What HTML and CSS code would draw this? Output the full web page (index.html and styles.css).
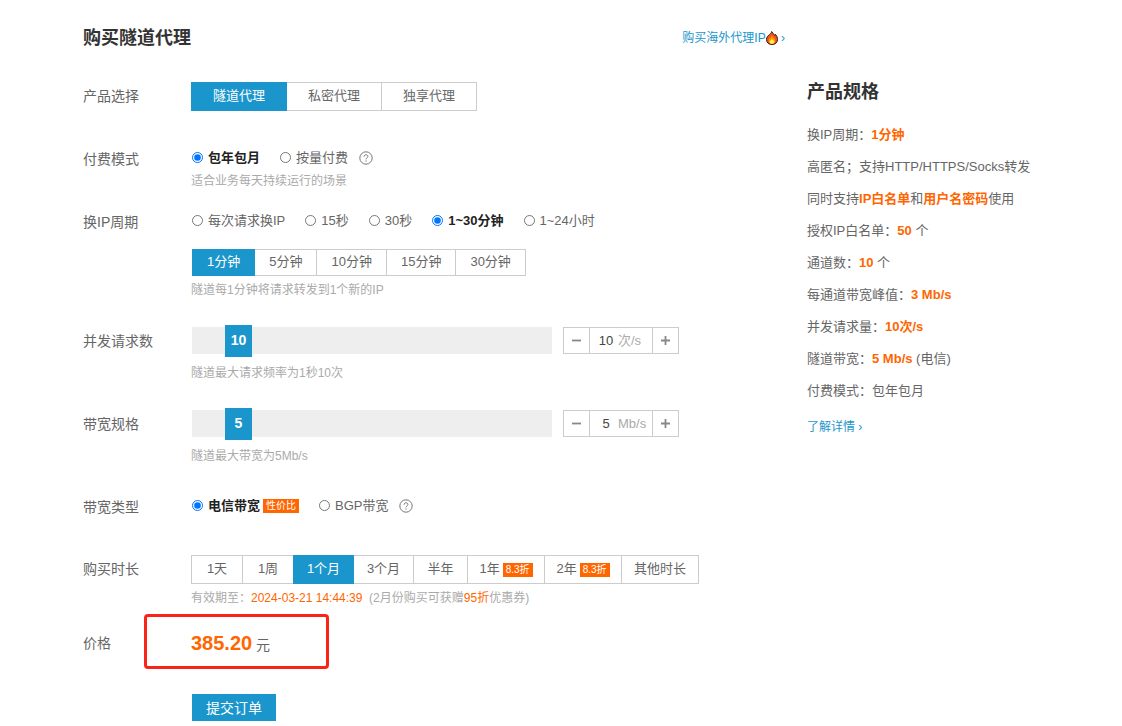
FILE: index.html
```html
<!DOCTYPE html>
<html lang="zh-CN">
<head>
<meta charset="utf-8">
<meta name="viewport" content="width=device-width, initial-scale=1">
<title>购买隧道代理</title>
<link rel="stylesheet" href="styles.css">
</head>
<body>
<div class="page">
  <main class="order">
    <header class="order-head">
      <h1 class="title">购买隧道代理</h1>
      <a class="link" href="#overseas">购买海外代理IP<svg class="flame" viewBox="0 0 12 14" aria-hidden="true"><path d="M5.600.5C6.400 2.300 8.300 3.200 9 4.600c.4-.3.5-.7.5-1.200C11 5 11.500 6.800 11.500 8.500c0 3-2.300 5-5.500 5s-5.500-2-5.500-5C.5 6 2 4.800 3.400 3.700 4.700 2.700 5.500 1.800 5.600.5z" fill="#f4511e" stroke="#3a1a10" stroke-width="1"/><path d="M5.700 4.500c.8 1.600 3.600 2.500 3.600 5 0 1.900-1.400 3.200-3.300 3.200s-3.300-1.300-3.300-3.200c0-1.300.6-2.100 1.100-2.800.3.500.6.7 1 .8-.1-1.200.2-2.200.9-3z" fill="#ff9800"/><path d="M6 8c.5 1 2.400 1.600 2.400 3 0 1.100-1.100 1.900-2.400 1.900s-2.400-.8-2.400-1.900c0-1.200 1.900-1.900 2.400-3z" fill="#ffee58"/></svg>&nbsp;›</a>
    </header>

    <form class="form">
      <div class="row">
        <span class="label" id="l-product">产品选择</span>
        <div class="content" role="group" aria-labelledby="l-product">
          <div class="seg seg-product">
            <button type="button" class="opt on">隧道代理</button><button type="button" class="opt">私密代理</button><button type="button" class="opt">独享代理</button>
          </div>
        </div>
      </div>

      <div class="row row-far">
        <span class="label" id="l-pay">付费模式</span>
        <div class="content" role="group" aria-labelledby="l-pay">
          <div class="radios">
            <label class="radio"><input type="radio" name="pay" checked><span>包年包月</span></label>
            <label class="radio"><input type="radio" name="pay"><span>按量付费</span></label>
            <button type="button" class="help" aria-label="说明"><svg viewBox="0 0 14 14" aria-hidden="true"><circle cx="7" cy="7" r="6.200"/><path d="M5.100 5.700c0-1.200.8-1.900 1.900-1.900s1.900.7 1.900 1.700c0 1.300-1.900 1.400-1.900 2.900M7 9.400v1.200"/></svg></button>
          </div>
          <p class="hint">适合业务每天持续运行的场景</p>
        </div>
      </div>

      <div class="row row-near">
        <span class="label" id="l-cycle">换IP周期</span>
        <div class="content" role="group" aria-labelledby="l-cycle">
          <div class="radios">
            <label class="radio"><input type="radio" name="cycle"><span>每次请求换IP</span></label>
            <label class="radio"><input type="radio" name="cycle"><span>15秒</span></label>
            <label class="radio"><input type="radio" name="cycle"><span>30秒</span></label>
            <label class="radio"><input type="radio" name="cycle" checked><span>1~30分钟</span></label>
            <label class="radio"><input type="radio" name="cycle"><span>1~24小时</span></label>
          </div>
          <div class="seg seg-minutes">
            <button type="button" class="opt on">1分钟</button><button type="button" class="opt">5分钟</button><button type="button" class="opt">10分钟</button><button type="button" class="opt">15分钟</button><button type="button" class="opt">30分钟</button>
          </div>
          <p class="hint hint-seg">隧道每1分钟将请求转发到1个新的IP</p>
        </div>
      </div>

      <div class="row">
        <label class="label" for="rate">并发请求数</label>
        <div class="content">
          <div class="amount">
            <div class="slider"><input type="range" id="rate" min="0" max="100" value="10"><output class="value" for="rate">10</output></div>
            <div class="stepper">
              <button type="button" class="step" aria-label="减少"><svg viewBox="0 0 10 10" aria-hidden="true"><path d="M0 5h10"/></svg></button>
              <label class="field"><input type="text" class="num" value="10" aria-label="并发请求数"><span>次/s</span></label>
              <button type="button" class="step" aria-label="增加"><svg viewBox="0 0 10 10" aria-hidden="true"><path d="M0 5h10M5 0v10"/></svg></button>
            </div>
          </div>
          <p class="hint hint-slider">隧道最大请求频率为1秒10次</p>
        </div>
      </div>

      <div class="row">
        <label class="label" for="band">带宽规格</label>
        <div class="content">
          <div class="amount">
            <div class="slider"><input type="range" id="band" min="0" max="50" value="5"><output class="value" for="band">5</output></div>
            <div class="stepper">
              <button type="button" class="step" aria-label="减少"><svg viewBox="0 0 10 10" aria-hidden="true"><path d="M0 5h10"/></svg></button>
              <label class="field"><input type="text" class="num" value="5" aria-label="带宽规格"><span>Mb/s</span></label>
              <button type="button" class="step" aria-label="增加"><svg viewBox="0 0 10 10" aria-hidden="true"><path d="M0 5h10M5 0v10"/></svg></button>
            </div>
          </div>
          <p class="hint hint-slider">隧道最大带宽为5Mb/s</p>
        </div>
      </div>

      <div class="row">
        <span class="label" id="l-type">带宽类型</span>
        <div class="content" role="group" aria-labelledby="l-type">
          <div class="radios">
            <label class="radio"><input type="radio" name="type" checked><span>电信带宽</span><b class="tag">性价比</b></label>
            <label class="radio"><input type="radio" name="type"><span>BGP带宽</span></label>
            <button type="button" class="help" aria-label="说明"><svg viewBox="0 0 14 14" aria-hidden="true"><circle cx="7" cy="7" r="6.200"/><path d="M5.100 5.700c0-1.200.8-1.900 1.900-1.900s1.900.7 1.900 1.700c0 1.300-1.900 1.400-1.900 2.900M7 9.400v1.200"/></svg></button>
          </div>
        </div>
      </div>

      <div class="row row-term">
        <span class="label" id="l-term">购买时长</span>
        <div class="content" role="group" aria-labelledby="l-term">
          <div class="seg seg-term">
            <button type="button" class="opt narrow">1天</button><button type="button" class="opt narrow">1周</button><button type="button" class="opt mid on">1个月</button><button type="button" class="opt mid">3个月</button><button type="button" class="opt half">半年</button><button type="button" class="opt wide">1年<b class="tag">8.3折</b></button><button type="button" class="opt wide">2年<b class="tag">8.3折</b></button><button type="button" class="opt wide">其他时长</button>
          </div>
          <p class="hint hint-seg">有效期至：<em>2024-03-21 14:44:39</em>&nbsp; (2月份购买可获赠<em>95折</em>优惠券)</p>
        </div>
      </div>

      <div class="row row-price">
        <span class="label">价格</span>
        <div class="content">
          <p class="price"><strong>385.20</strong> 元</p>
        </div>
      </div>

      <div class="row row-far">
        <button type="submit" class="submit">提交订单</button>
      </div>
    </form>
  </main>

  <aside class="spec">
    <h2 class="title">产品规格</h2>
    <ul class="list">
      <li>换IP周期：<strong>1分钟</strong></li>
      <li>高匿名；支持HTTP/HTTPS/Socks转发</li>
      <li>同时支持<strong>IP白名单</strong>和<strong>用户名密码</strong>使用</li>
      <li>授权IP白名单：<strong>50</strong> 个</li>
      <li>通道数：<strong>10</strong> 个</li>
      <li>每通道带宽峰值：<strong>3 Mb/s</strong></li>
      <li>并发请求量：<strong>10次/s</strong></li>
      <li>隧道带宽：<strong>5 Mb/s</strong> (电信)</li>
      <li>付费模式：包年包月</li>
    </ul>
    <a class="link more" href="#detail">了解详情 ›</a>
  </aside>
</div>
</body>
</html>
```
FILE: styles.css
```css
*, *::after { box-sizing: border-box; }
body, h1, h2, p, ul { margin: 0; padding: 0; }
body {
  background: #fff;
  color: #666;
  font: 13px/22px "Liberation Sans", "Noto Sans CJK SC", sans-serif;
}
button, input { font: inherit; color: inherit; margin: 0; padding: 0; }
button { cursor: pointer; }
em { color: #f60; font-style: normal; }

.page {
  display: grid;
  grid-template-columns: minmax(0, 702px) minmax(200px, 1fr);
  column-gap: 22px;
  padding: 24px 24px 0 83px;
}
.order-head {
  display: flex;
  align-items: center;
  justify-content: space-between;
  margin-bottom: 30px;
}
.title { font-size: 18px; line-height: 28px; font-weight: bold; color: #333; }
.link { color: #1b96cc; font-size: 12px; text-decoration: none; }
.flame { width: 12px; height: 14px; vertical-align: -3px; }

.row { display: flex; margin-top: 26px; }
.row:first-child { margin-top: 0; }
.row-far { margin-top: 34px; }
.row-near { margin-top: 16px; }
.row-term { margin-top: 33px; }
.row-price { margin-top: 20px; }
.label { flex: 0 0 108px; font-size: 14px; line-height: 29px; }
.content { flex: 1; min-width: 0; }
.hint { font-size: 12px; line-height: 22px; color: #aaa; }
.hint-seg { margin-top: 3px; }
.hint-slider { margin-top: 8px; }

.seg { display: flex; }
.opt {
  height: 29px;
  padding: 0 21px 2px;
  border: 1px solid #ccc;
  background: #fff;
  line-height: 25px;
  white-space: nowrap;
}
.opt + .opt { margin-left: -1px; }
.opt.on { position: relative; background: #1b96cc; border-color: #1b96cc; color: #fff; }
.seg-minutes { margin-top: 16px; padding-left: 1px; }
.seg-minutes .opt { height: 27px; padding: 0 14px 2px; line-height: 23px; }
.seg-term .opt { padding: 0 0 2px; }
.narrow { width: 52px; }
.mid { width: 61px; }
.half { width: 55px; }
.wide { width: 78px; }
.tag {
  display: inline-block;
  padding: 0 3px;
  background: #f60;
  color: #fff;
  font-size: 10px;
  font-weight: normal;
  line-height: 14px;
  margin-left: 3px;
}

.radios { display: flex; align-items: center; gap: 19px; height: 25px; }
.radio { display: flex; align-items: center; white-space: nowrap; }
.radio input { width: 11px; height: 11px; margin: 0 5px 0 1px; }
.radio input:checked + span { color: #222; font-weight: bold; }
.help { display: flex; margin-left: -8px; border: 0; background: none; }
.help svg { width: 14px; height: 14px; fill: none; stroke: #777; stroke-width: 1; }

.amount { display: flex; gap: 11px; padding-left: 1px; }
.slider { position: relative; flex: 0 1 360px; height: 27px; background: #eee; }
.slider input {
  position: absolute;
  top: -2px;
  left: 0;
  width: 100%;
  height: 32px;
  appearance: none;
  background: none;
}
.slider input::-webkit-slider-thumb {
  appearance: none;
  width: 27px;
  height: 32px;
  background: #1b96cc;
}
.value {
  position: absolute;
  top: -2px;
  left: 33px;
  width: 27px;
  color: #fff;
  font-size: 14px;
  font-weight: bold;
  line-height: 30px;
  text-align: center;
  pointer-events: none;
}
.stepper { display: flex; height: 27px; border: 1px solid #ccc; }
.step { display: flex; align-items: center; justify-content: center; width: 25px; border: 0; background: #fff; }
.step svg { width: 9px; height: 9px; stroke: #888; stroke-width: 2; }
.field {
  display: flex;
  align-items: center;
  width: 64px;
  padding-left: 4px;
  border: solid #ccc;
  border-width: 0 1px;
  color: #aaa;
}
.num { width: 24px; border: 0; background: none; color: #444; text-align: center; }

.price { position: relative; font-size: 14px; line-height: 29px; }
.price strong { color: #f60; font-size: 20px; }
.price::after {
  content: "";
  position: absolute;
  top: -15px;
  left: -47px;
  width: 185px;
  height: 55px;
  border: 3px solid #fb2318;
  border-radius: 4px;
  pointer-events: none;
}
.submit {
  height: 27px;
  margin-left: 109px;
  padding: 0 14px;
  border: 0;
  background: #1b96cc;
  color: #fff;
  font-size: 14px;
}

.spec { padding-top: 54px; }
.list { margin-top: 13px; list-style: none; line-height: 32px; }
.list strong { color: #f60; }
.more { display: inline-block; margin-top: 9px; }
```
